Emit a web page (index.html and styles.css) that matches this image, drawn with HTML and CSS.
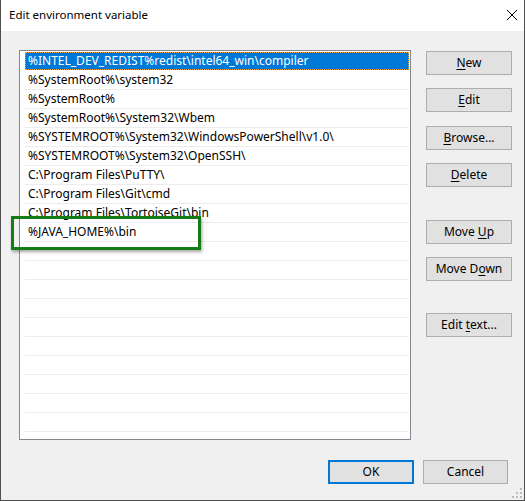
FILE: index.html
```html
<!DOCTYPE html>
<html>
<head>
<meta charset="utf-8">
<link rel="stylesheet" href="styles.css">
</head>
<body>
<div class="window">
  <div class="titlebar">
    <span class="title">Edit environment variable</span>
    <svg class="close" width="12" height="12" viewBox="0 0 12 12"><path d="M1 1 L11 11 M11 1 L1 11" stroke="#000" stroke-width="1" fill="none"/></svg>
  </div>
  <div class="content">
    <div class="main">
      <div class="list">
        <div class="row selected">%INTEL_DEV_REDIST%redist\intel64_win\compiler</div>
        <div class="row">%SystemRoot%\system32</div>
        <div class="row">%SystemRoot%</div>
        <div class="row">%SystemRoot%\System32\Wbem</div>
        <div class="row">%SYSTEMROOT%\System32\WindowsPowerShell\v1.0\</div>
        <div class="row">%SYSTEMROOT%\System32\OpenSSH\</div>
        <div class="row">C:\Program Files\PuTTY\</div>
        <div class="row">C:\Program Files\Git\cmd</div>
        <div class="row">C:\Program Files\TortoiseGit\bin</div>
        <div class="row">%JAVA_HOME%\bin</div>
        <div class="row"></div>
        <div class="row"></div>
        <div class="row"></div>
        <div class="row"></div>
        <div class="row"></div>
        <div class="row"></div>
        <div class="row"></div>
        <div class="row"></div>
        <div class="row"></div>
        <div class="row"></div>
        <div class="highlight"></div>
      </div>
      <div class="side">
        <button class="btn b-new"><u>N</u>ew</button>
        <button class="btn b-edit"><u>E</u>dit</button>
        <button class="btn b-browse"><u>B</u>rowse...</button>
        <button class="btn b-delete"><u>D</u>elete</button>
        <button class="btn b-up">Move <u>U</u>p</button>
        <button class="btn b-down">Move D<u>o</u>wn</button>
        <button class="btn b-text">Edit <u>t</u>ext...</button>
      </div>
    </div>
    <div class="footer">
      <button class="btn ok">OK</button>
      <button class="btn cancel">Cancel</button>
    </div>
    <svg class="grip" width="12" height="12" viewBox="0 0 12 12">
      <rect x="9" y="1" width="2" height="2" fill="#bcbcbc"/>
      <rect x="5" y="5" width="2" height="2" fill="#bcbcbc"/>
      <rect x="9" y="5" width="2" height="2" fill="#bcbcbc"/>
      <rect x="1" y="9" width="2" height="2" fill="#bcbcbc"/>
      <rect x="5" y="9" width="2" height="2" fill="#bcbcbc"/>
      <rect x="9" y="9" width="2" height="2" fill="#bcbcbc"/>
    </svg>
  </div>
</div>
</body>
</html>
```
FILE: styles.css
```css
* { box-sizing: border-box; }
html, body { margin: 0; padding: 0; background: #ffffff; }
body {
  font-family: "Noto Sans", "Open Sans", sans-serif;
  font-size: 12px;
  color: #000;
}
.window {
  width: 525px;
  height: 501px;
  border-left: 1px solid #4f4f4f;
  border-right: 1px solid #4f4f4f;
  border-bottom: 1px solid #4f4f4f;
  display: flex;
  flex-direction: column;
}
.titlebar {
  height: 31px;
  background: #fff;
  display: flex;
  align-items: center;
  justify-content: space-between;
  padding-left: 8px;
  padding-right: 6px;
  flex: none;
}
.title { font-size: 11.5px; line-height: 16px; padding-bottom: 1px; }
.close { display: block; margin-bottom: 2px; }
.content {
  flex: 1;
  background: #f0f0f0;
  position: relative;
  padding: 19px 16px 0 18px;
}
.main { display: flex; gap: 15px; }
.list {
  position: relative;
  width: 392px;
  height: 390px;
  background: #fff;
  border: 1px solid #828790;
  padding: 1px 1px 0 5px;
}
.row {
  height: 19px;
  width: 384px;
  border-bottom: 1px solid #ececec;
  padding-left: 3px;
  line-height: 18px;
  white-space: nowrap;
  overflow: hidden;
}
.row.selected {
  background: #0078d7;
  color: #fff;
  outline: 1px dotted #f3a23a;
  outline-offset: -1px;
  height: 18px;
  margin-bottom: 1px;
  border-bottom: none;
}
.highlight {
  position: absolute;
  left: -9px;
  top: 165px;
  width: 190px;
  height: 34px;
  border: 3px solid #147c14;
  box-shadow: 1px 2px 3px rgba(0,0,0,0.35);
}
.side {
  display: flex;
  flex-direction: column;
  padding-top: 1px;
}
.btn {
  font-family: "Noto Sans", "Open Sans", sans-serif;
  font-size: 12px;
  color: #000;
  height: 24px;
  width: 86px;
  background: #e1e1e1;
  border: 1px solid #adadad;
  padding: 0;
  line-height: 20px;
  margin: 0;
}
.btn u { text-decoration-thickness: 1px; text-underline-offset: 2px; }
.b-edit { margin-top: 13px; }
.b-browse { margin-top: 14px; }
.b-delete { margin-top: 13px; }
.b-up { margin-top: 33px; }
.b-down { margin-top: 13px; }
.b-text { margin-top: 32px; }
.footer {
  display: flex;
  justify-content: flex-end;
  gap: 9px;
  margin-top: 20px;
}
.ok { border: 2px solid #0078d7; width: 86px; }
.cancel { width: 85px; }
.grip {
  position: absolute;
  right: 1px;
  bottom: 1px;
  display: block;
}
```
